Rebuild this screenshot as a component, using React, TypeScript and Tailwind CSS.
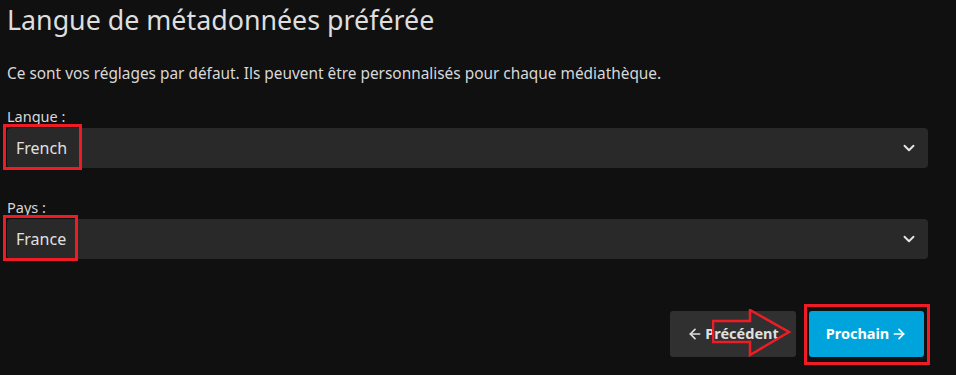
import { ArrowLeft, ArrowRight, ChevronDown } from "lucide-react";

function SelectField({ label, value }: { label: string; value: string }) {
  return (
    <div className="flex flex-col">
      <label className="text-[14.5px] leading-[18px] text-[#d8d8d8]">{label}</label>
      <div className="relative mt-[3px] flex h-[40px] items-center justify-between rounded-[4px] bg-[#292929] pl-[9px] pr-[10px]">
        <span className="text-[16px] text-[#e0e0e0]">{value}</span>
        <ChevronDown size={18} strokeWidth={2.5} className="text-[#e6e6e6]" />
        <div className="pointer-events-none absolute -left-[4px] -top-[4px] h-[46px] border-[3px] border-[#ee1c25]" style={{ width: value === "French" ? 79 : 75 }} />
      </div>
    </div>
  );
}

export default function App() {
  return (
    <div className="min-h-[375px] w-[956px] bg-[#101010] pl-[7px] pr-[28px] font-['Noto_Sans',sans-serif]">
      <h1 className="pt-[4px] text-[26.8px] leading-[31px] text-[#dedede]">Langue de métadonnées préférée</h1>
      <p className="mt-[29px] text-[15.4px] leading-[19px] text-[#d8d8d8]">
        Ce sont vos réglages par défaut. Ils peuvent être personnalisés pour chaque médiathèque.
      </p>
      <div className="mt-[24px]">
        <SelectField label="Langue :" value="French" />
      </div>
      <div className="mt-[30px]">
        <SelectField label="Pays :" value="France" />
      </div>
      <div className="mt-[52px] flex justify-end gap-[13px] pr-[4px]">
        <div className="relative">
          <button className="flex h-[46px] w-[126px] items-center justify-center gap-[2px] rounded-[3px] bg-[#303030] text-[14.5px] font-bold text-[#e0e0e0]">
            <ArrowLeft size={16} strokeWidth={2.5} />
            Précédent
          </button>
          <svg className="pointer-events-none absolute left-[42px] top-[-2px]" width="80" height="48" viewBox="0 0 80 48">
            <path d="M1 12 H38 V1 L77 23 L38 46 V33 H1 Z" fill="none" stroke="#ee1c25" strokeWidth="2.5" />
          </svg>
        </div>
        <div className="relative">
          <button className="flex h-[46px] w-[115px] items-center justify-center gap-[2px] rounded-[3px] bg-[#00a4dc] text-[14.5px] font-bold text-white">
            Prochain
            <ArrowRight size={16} strokeWidth={2.5} />
          </button>
          <div className="pointer-events-none absolute -left-[5px] -top-[7px] h-[61px] w-[126px] border-[3px] border-[#ee1c25]" />
        </div>
      </div>
    </div>
  );
}
